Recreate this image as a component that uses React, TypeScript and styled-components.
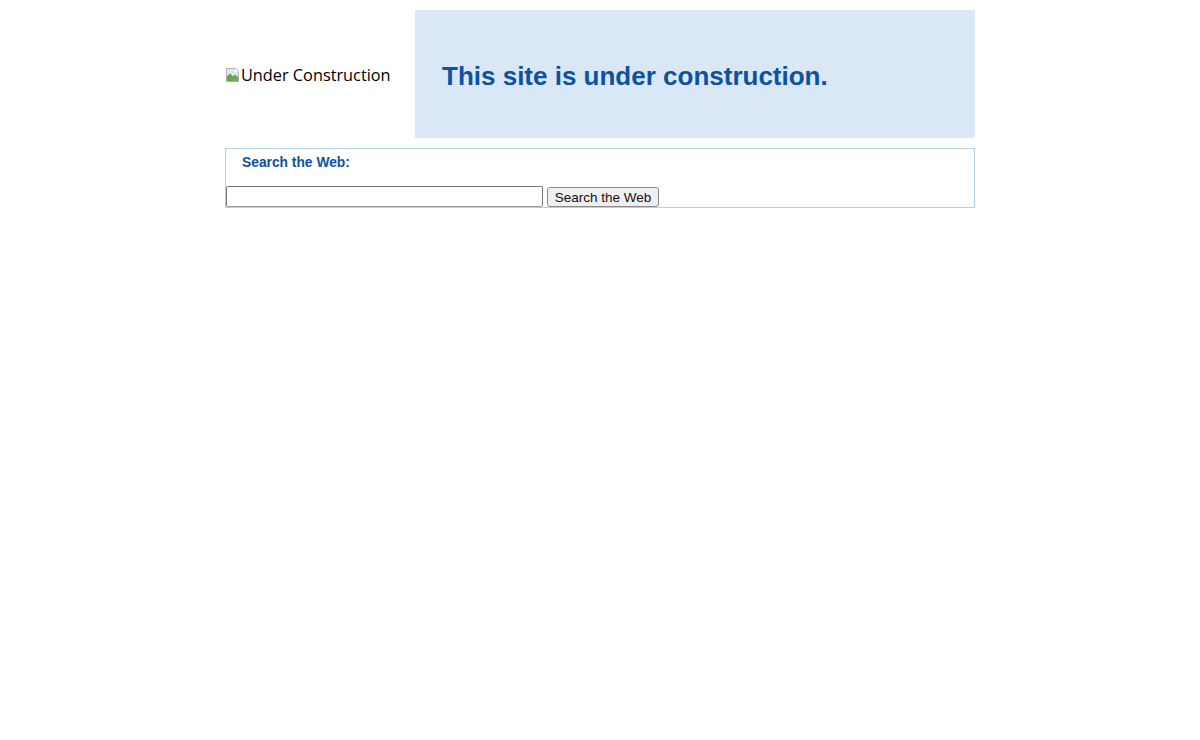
import styled, { createGlobalStyle } from 'styled-components'

const GlobalStyle = createGlobalStyle`
  html, body {
    margin: 0;
    background: #ffffff;
  }
  body {
    padding: 10px 0 0;
    font-family: "Liberation Sans", Arial, sans-serif;
  }
`

const Page = styled.div`
  width: 750px;
  margin: 0 auto;
  display: flex;
  flex-direction: column;
  gap: 10px;
`

const Header = styled.div`
  display: flex;
  height: 128px;
`

const LogoCell = styled.div`
  width: 190px;
  display: flex;
  align-items: center;
  font-family: "Open Sans", "Noto Sans", sans-serif;
  font-size: 16.3px;
  color: #000;
  padding-top: 2px;
`

const Banner = styled.div`
  flex: 1;
  background: #dae7f7;
  display: flex;
  align-items: center;
  padding: 0 27px;
`

const Title = styled.h1`
  margin: 0;
  font-size: 26px;
  font-weight: bold;
  color: #0b52a0;
  padding-top: 4px;
`

const SearchBox = styled.form`
  border: 1px solid #b3d0e4;
  height: 58px;
  display: flex;
  flex-direction: column;
`

const SearchLabel = styled.div`
  font-size: 13.8px;
  font-weight: bold;
  color: #0b52a0;
  padding: 6px 0 0 16px;
  height: 37px;
  box-sizing: border-box;
`

const SearchRow = styled.div`
  display: flex;
  align-items: center;
  gap: 4px;
`

const Input = styled.input`
  width: 317px;
  height: 21px;
  box-sizing: border-box;
  border: 1px solid #767676;
  border-bottom-color: #9a9a9a;
  border-radius: 2px;
  padding: 1px 2px;
  font: 13px "Liberation Sans", Arial, sans-serif;
  margin: 0;
`

const Button = styled.button`
  height: 20px;
  width: 112px;
  box-sizing: border-box;
  border: 1px solid #8a8a8a;
  border-radius: 3px;
  background: #f0f0f0;
  font: 13.5px "Liberation Sans", Arial, sans-serif;
  color: #111;
  padding: 0 6px;
  margin: 1px 0 0;
`

function BrokenImage() {
  return (
    <svg width="16" height="16" viewBox="0 0 16 16" aria-hidden>
      <path d="M1.5 1.5h9l3 3v10h-12z" fill="#fff" stroke="#b0b0b0" />
      <path d="M2 9l3-3 3 3 2-2 3 3v4H2z" fill="#6aa84f" />
      <path d="M2 2h8v3h3v4L10 7 8 9 5 6 2 9z" fill="#dbe9f6" />
    </svg>
  )
}

export default function App() {
  return (
    <>
      <GlobalStyle />
      <Page>
        <Header>
          <LogoCell>
            <BrokenImage />
            Under Construction
          </LogoCell>
          <Banner>
            <Title>This site is under construction.</Title>
          </Banner>
        </Header>
        <SearchBox onSubmit={e => e.preventDefault()}>
          <SearchLabel>Search the Web:</SearchLabel>
          <SearchRow>
            <Input type="text" />
            <Button type="submit">Search the Web</Button>
          </SearchRow>
        </SearchBox>
      </Page>
    </>
  )
}
